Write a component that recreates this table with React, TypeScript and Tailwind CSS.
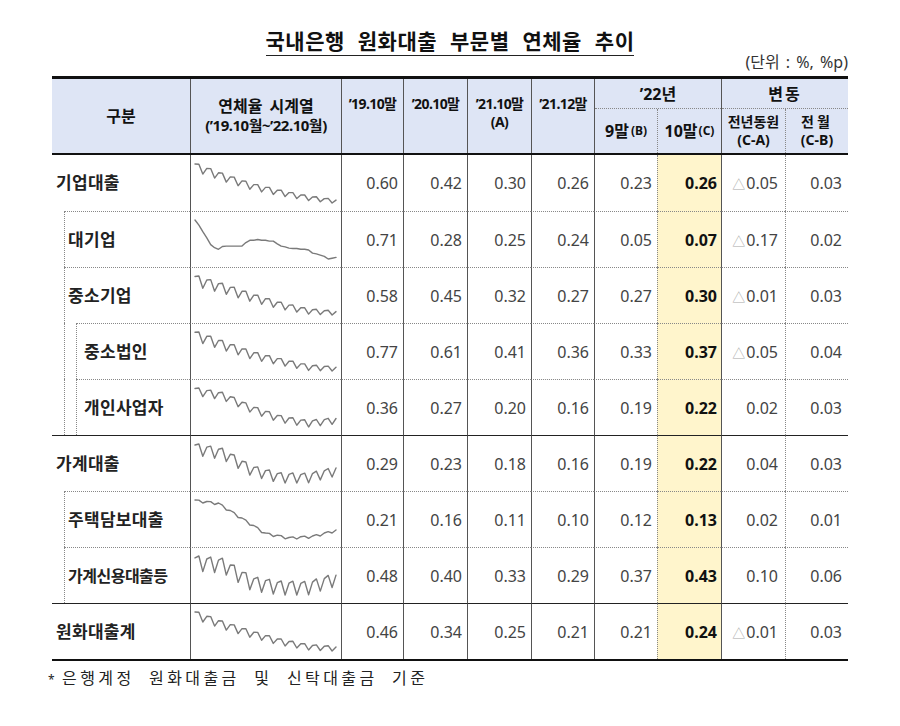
import React from "react";

const N = 37;

function build(knots: number[], a0: number, a1: number): number[] {
  const out: number[] = [];
  for (let i = 0; i < N; i++) {
    const t = (i / (N - 1)) * (knots.length - 1);
    const k = Math.min(Math.floor(t), knots.length - 2);
    const f = t - k;
    const base = knots[k] * (1 - f) + knots[k + 1] * f;
    const amp = a0 + (a1 - a0) * (i / (N - 1));
    out.push(base + amp * [0.85, 1, 0][i % 3]);
  }
  return out;
}

// 대기업 series has its own shape (no quarterly sawtooth)
const bigCorp = [
  1.0, 0.87, 0.7, 0.54, 0.37, 0.29, 0.25, 0.32, 0.33, 0.33, 0.33, 0.33, 0.33,
  0.42, 0.48, 0.48, 0.5, 0.48, 0.48, 0.46, 0.46, 0.39, 0.33, 0.31, 0.28, 0.27,
  0.27, 0.25, 0.25, 0.23, 0.15, 0.13, 0.1, 0.07, 0.0, 0.02, 0.04,
];

type Row = {
  label: string;
  level: 0 | 1 | 2;
  line: "none" | "solid" | "dot";
  spark: number[];
  v: string[];
  narrow?: boolean;
};

const rows: Row[] = [
  { label: "기업대출", level: 0, line: "none", spark: build([0.55, 0.45, 0.36, 0.3, 0.25, 0.22], 0.09, 0.04), v: ["0.60", "0.42", "0.30", "0.26", "0.23", "0.26", "△0.05", "0.03"] },
  { label: "대기업", level: 1, line: "dot", spark: bigCorp, v: ["0.71", "0.28", "0.25", "0.24", "0.05", "0.07", "△0.17", "0.02"] },
  { label: "중소기업", level: 1, line: "dot", spark: build([0.52, 0.45, 0.37, 0.3, 0.25, 0.24], 0.11, 0.04), v: ["0.58", "0.45", "0.32", "0.27", "0.27", "0.30", "△0.01", "0.03"] },
  { label: "중소법인", level: 2, line: "dot", spark: build([0.7, 0.58, 0.46, 0.38, 0.31, 0.3], 0.14, 0.06), v: ["0.77", "0.61", "0.41", "0.36", "0.33", "0.37", "△0.05", "0.04"] },
  { label: "개인사업자", level: 2, line: "dot", spark: build([0.33, 0.3, 0.22, 0.16, 0.13, 0.15], 0.05, 0.04), v: ["0.36", "0.27", "0.20", "0.16", "0.19", "0.22", "0.02", "0.03"] },
  { label: "가계대출", level: 0, line: "solid", spark: build([0.27, 0.25, 0.18, 0.15, 0.15, 0.18], 0.05, 0.04), v: ["0.29", "0.23", "0.18", "0.16", "0.19", "0.22", "0.04", "0.03"] },
  { label: "주택담보대출", level: 1, line: "dot", spark: build([0.22, 0.21, 0.16, 0.11, 0.095, 0.1, 0.12], 0.008, 0.008), v: ["0.21", "0.16", "0.11", "0.10", "0.12", "0.13", "0.02", "0.01"] },
  { label: "가계신용대출등", level: 1, line: "dot", narrow: true, spark: build([0.5, 0.48, 0.32, 0.28, 0.28, 0.36], 0.14, 0.12), v: ["0.48", "0.40", "0.33", "0.29", "0.37", "0.43", "0.10", "0.06"] },
  { label: "원화대출계", level: 0, line: "solid", spark: build([0.44, 0.36, 0.29, 0.23, 0.19, 0.18], 0.07, 0.04), v: ["0.46", "0.34", "0.25", "0.21", "0.21", "0.24", "△0.01", "0.03"] },
];

const TOP = {
  none: "",
  solid: "border-t border-t-[#222]",
  dot: "border-t border-t-[#888] [border-top-style:dotted]",
};

const COLS = [
  "w-[62px] border-l border-l-[#555] pr-[5px] text-[#444]",
  "w-[64px] border-l border-l-[#555] pr-[5px] text-[#444]",
  "w-[64px] border-l border-l-[#555] pr-[5px] text-[#444]",
  "w-[63px] border-l border-l-[#555] pr-[5px] text-[#444]",
  "w-[63px] border-l border-l-[#555] pr-[5px] text-[#444]",
  "w-[64px] border-l border-l-[#888] [border-left-style:dotted] pr-[4px] bg-[#fff5cc] font-bold text-[#111]",
  "w-[64px] border-l border-l-[#555] pr-[7px] text-[#444]",
  "w-[63px] border-l border-l-[#888] [border-left-style:dotted] pr-[6px] text-[#444]",
];

function Spark({ data }: { data: number[] }) {
  const min = Math.min(...data);
  const max = Math.max(...data);
  const pts = data
    .map((v, i) => {
      const x = 4 + (i / (data.length - 1)) * 141;
      const y = 8 + (1 - (v - min) / (max - min)) * 39;
      return `${x.toFixed(1)},${y.toFixed(1)}`;
    })
    .join(" ");
  return (
    <svg width="150" height="55" viewBox="0 0 150 55" className="block">
      <polyline points={pts} fill="none" stroke="#7a7a7a" strokeWidth="1.4" strokeLinejoin="round" strokeLinecap="round" />
    </svg>
  );
}

function Label({ row }: { row: Row }) {
  const text = (
    <span
      className={
        row.narrow
          ? "text-[16px] font-bold tracking-[-0.5px] text-[#222]"
          : "text-[17px] font-bold tracking-[0.3px] text-[#222]"
      }
    >
      {row.label}
    </span>
  );
  if (row.level === 0) {
    return <div className={`flex w-[138px] shrink-0 items-center pl-[4px] ${TOP[row.line]}`}>{text}</div>;
  }
  if (row.level === 1) {
    return (
      <div className="flex w-[138px] shrink-0 pl-[12px]">
        <div className={`flex flex-1 items-center border-l border-l-[#888] pl-[3px] [border-left-style:dotted] ${TOP[row.line]}`}>
          {text}
        </div>
      </div>
    );
  }
  return (
    <div className="flex w-[138px] shrink-0 pl-[12px]">
      <div className="flex flex-1 border-l border-l-[#888] pl-[11px] [border-left-style:dotted]">
        <div className={`flex flex-1 items-center border-l border-l-[#888] pl-[7px] [border-left-style:dotted] ${TOP[row.line]}`}>
          {text}
        </div>
      </div>
    </div>
  );
}

function Value({ v }: { v: string }) {
  if (v.startsWith("△")) {
    return (
      <span>
        <span className="mr-[1px] text-[13px] font-normal text-[#aaa]">△</span>
        {v.slice(1)}
      </span>
    );
  }
  return <span>{v}</span>;
}

function Header() {
  return (
    <div className="flex h-[79px] border-t-[3px] border-b-2 border-t-[#111] border-b-[#111] bg-[#dee5f5] font-bold text-[#111]">
      <div className="flex w-[138px] shrink-0 items-center justify-center text-[16px]">구분</div>
      <div className="flex w-[151px] shrink-0 flex-col items-center justify-center border-l border-l-[#555] leading-[19px]">
        <span className="text-[16px] [word-spacing:3px]">연체율 시계열</span>
        <span className="text-[15px] tracking-[-0.5px]">(’19.10월~’22.10월)</span>
      </div>
      <div className="w-[62px] shrink-0 border-l border-l-[#555] pt-[16px] text-center text-[14px] leading-[18px] tracking-[-0.6px]">’19.10말</div>
      <div className="w-[64px] shrink-0 border-l border-l-[#555] pt-[16px] text-center text-[14px] leading-[18px] tracking-[-0.6px]">’20.10말</div>
      <div className="w-[64px] shrink-0 border-l border-l-[#555] pt-[16px] text-center text-[14px] leading-[18px] tracking-[-0.6px]">
        ’21.10말
        <br />
        (A)
      </div>
      <div className="w-[63px] shrink-0 border-l border-l-[#555] pt-[16px] text-center text-[14px] leading-[18px] tracking-[-0.6px]">’21.12말</div>
      <div className="flex w-[127px] shrink-0 flex-col border-l border-l-[#555]">
        <div className="flex h-[30px] items-center justify-center border-b border-b-[#888] text-[16px] [border-bottom-style:dotted]">’22년</div>
        <div className="flex flex-1">
          <div className="flex w-[62px] items-center justify-center text-[16px]">
            9말<span className="ml-[2px] text-[12px]">(B)</span>
          </div>
          <div className="flex w-[64px] items-center justify-center border-l border-l-[#888] text-[16px] [border-left-style:dotted]">
            10말<span className="ml-[1px] text-[12px]">(C)</span>
          </div>
        </div>
      </div>
      <div className="flex w-[127px] shrink-0 flex-col border-l border-l-[#555]">
        <div className="flex h-[30px] items-center justify-center border-b border-b-[#888] text-[16px] tracking-[2px] [border-bottom-style:dotted]">변동</div>
        <div className="flex flex-1">
          <div className="flex w-[63px] flex-col items-center justify-center leading-[18px]">
            <span className="text-[14px]">전년동원</span>
            <span className="text-[14px]">(C-A)</span>
          </div>
          <div className="flex w-[63px] flex-col items-center justify-center border-l border-l-[#888] leading-[18px] [border-left-style:dotted]">
            <span className="text-[14px] tracking-[3px]">전월</span>
            <span className="text-[14px]">(C-B)</span>
          </div>
        </div>
      </div>
    </div>
  );
}

export default function App() {
  return (
    <div className="h-[726px] w-[900px] bg-white pl-[52px] pt-[29px] font-['Noto_Sans','Noto_Sans_CJK_KR',sans-serif] text-[#222]">
      <div className="w-[796px]">
        <div className="flex justify-center">
          <span className="inline-block border-b border-b-[#222] pb-[2px] text-[21px] font-bold leading-[24px] tracking-[0.5px] text-[#111] [word-spacing:7px]">
            국내은행 원화대출 부문별 연체율 추이
          </span>
        </div>
        <div className="-mt-[3px] h-[18px] text-right text-[16px] leading-[18px] text-[#333] [word-spacing:2px]">(단위 : %, %p)</div>
        <div className="mt-[5px] border-b-2 border-b-[#111]">
          <Header />
          {rows.map((r) => (
            <div key={r.label} className="flex h-[56px]">
              <Label row={r} />
              <div className={`flex w-[151px] shrink-0 items-center border-l border-l-[#555] ${TOP[r.line]}`}>
                <Spark data={r.spark} />
              </div>
              {r.v.map((v, i) => (
                <div key={i} className={`flex shrink-0 items-center justify-end text-[16px] ${COLS[i]} ${TOP[r.line]}`}>
                  <Value v={v} />
                </div>
              ))}
            </div>
          ))}
        </div>
        <div className="mt-[8px] text-[16px] leading-[18px] tracking-[3.4px] text-[#222] [word-spacing:7px]">
          <span className="-ml-[4px] mr-[4px] text-[12px]">*</span>은행계정 원화대출금 및 신탁대출금 기준
        </div>
      </div>
    </div>
  );
}
